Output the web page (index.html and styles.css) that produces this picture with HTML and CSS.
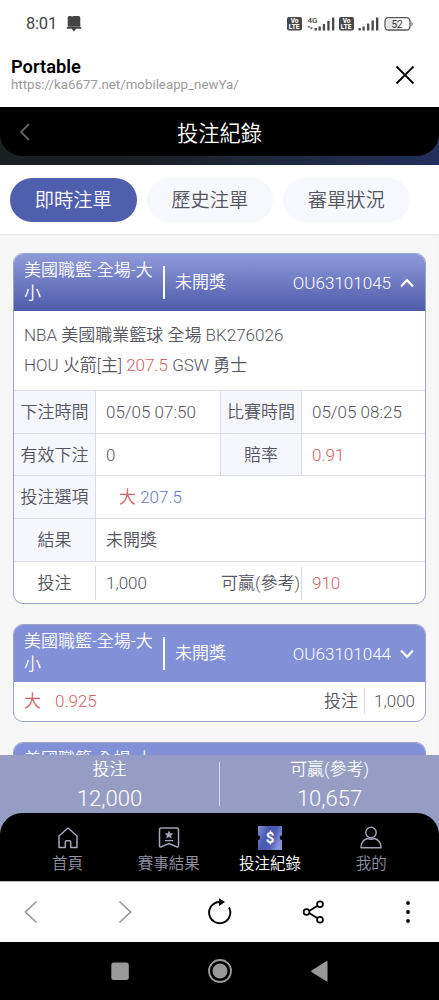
FILE: index.html
```
<!DOCTYPE html>
<html lang="zh-Hant">
<head>
    <meta charset="UTF-8">
    <meta name="viewport" content="width=device-width, initial-scale=1.0">
    <title>投注紀錄</title>
    <link rel="stylesheet" href="styles.css">
</head>
<body>

<!-- Status bar -->
<div class="status-bar">
    <span class="clock">8:01</span>
    <svg class="bell" width="16" height="16" viewBox="0 0 16 16"><path d="M3.500 0h1.800l.7 1 .8-1h5.700Q14.300 0 14.300 1.500v9.200H1.700V1.500Q1.700 0 3.500 0zM.8 11h14.400v1.800H.8zM5.800 12.800h4.400L8 15.500z" fill="#444"/></svg>
    <svg class="signals" width="130" height="18" viewBox="0 0 130 18">
        <g fill="#484848">
            <rect x="0" y="2" width="15" height="13.500" rx="2"/>
            <rect x="52" y="2" width="15" height="13.500" rx="2"/>
            <path d="M27.500 13h2.300v2.500h-2.300zM31.500 11.500h2.300v4h-2.300zM35.800 9h2.300v6.500h-2.300zM40.300 6h2.300v9.500h-2.300zM45 2.500h2.300v13H45zM71.500 13h2.300v2.500h-2.300zM75.500 11.500h2.300v4h-2.300zM80 8.500h2.300v7H80zM84.500 5.500h2.300v10h-2.300zM89 2.500h2.300v13H89z"/>
            <path d="M22 10.500l1.500 2h-3zM24.500 14.500l1.500-2h-3z"/>
            <path d="M124.500 6.500q2.200 2.200 0 5z"/>
        </g>
        <rect x="98" y="2.700" width="25" height="12.300" rx="3.500" fill="#fff" stroke="#555" stroke-width="1.300"/>
        <path d="M101 4.500h10v8.700h-10q-1.500 0-1.500-1.500V6q0-1.500 1.500-1.500z" fill="#e2e2e2"/>
        <g class="status-text">
            <text x="3.700" y="8.300" fill="#fff">Vo</text>
            <text x="1.800" y="14.300" fill="#fff">LTE</text>
            <text x="55.700" y="8.300" fill="#fff">Vo</text>
            <text x="53.800" y="14.300" fill="#fff">LTE</text>
            <text x="20.500" y="8" class="net">4G</text>
            <text x="104.500" y="12.700" class="level">52</text>
        </g>
    </svg>
</div>

<!-- Browser header -->
<div class="browser-head">
    <div>
        <div class="site-name">Portable</div>
        <div class="site-url">https://ka6677.net/mobileapp_newYa/</div>
    </div>
    <svg width="20" height="20" viewBox="0 0 20 20"><path d="M1.500 1.500l17 17M18.500 1.500l-17 17" stroke="#000" stroke-width="1.800"/></svg>
</div>

<!-- App header -->
<div class="app-top">
    <header class="app-header">
        <svg width="12" height="18" viewBox="0 0 12 18"><path d="M10 1L2 9l8 8" fill="none" stroke="#61636b" stroke-width="1.800"/></svg>
        <h1>投注紀錄</h1>
    </header>
</div>

<div class="tabs">
    <button class="tab active">即時注單</button>
    <button class="tab">歷史注單</button>
    <button class="tab">審單狀況</button>
</div>

<main class="bet-list">
    <section class="bet open">
        <div class="bet-head">
            <span class="game">美國職籃-全場-大小</span>
            <span class="state">未開獎</span>
            <span class="order">OU63101045</span>
            <svg width="14" height="10" viewBox="0 0 14 10"><path d="M1 8.500l6-6.300 6 6.300" fill="none" stroke="#fff" stroke-width="2.200"/></svg>
        </div>
        <div class="match">
            <p>NBA <span class="zh">美國職業籃球 全場</span> BK276026</p>
            <p>HOU <span class="zh">火箭[主]</span> <span class="red">207.5</span> GSW <span class="zh">勇士</span></p>
        </div>
        <div class="row">
            <span class="label">下注時間</span><span class="value">05/05 07:50</span>
            <span class="label second">比賽時間</span><span class="value">05/05 08:25</span>
        </div>
        <div class="row">
            <span class="label">有效下注</span><span class="value">0</span>
            <span class="label second">賠率</span><span class="value red">0.91</span>
        </div>
        <div class="row">
            <span class="label">投注選項</span><span class="value wide pick"><span class="red zh">大</span> <span class="blue">207.5</span></span>
        </div>
        <div class="row">
            <span class="label">結果</span><span class="value wide zh">未開獎</span>
        </div>
        <div class="row amount">
            <span class="label">投注</span><span class="value">1,000</span>
            <span class="label second">可贏(參考)</span><span class="value red">910</span>
        </div>
    </section>

    <section class="bet">
        <div class="bet-head">
            <span class="game">美國職籃-全場-大小</span>
            <span class="state">未開獎</span>
            <span class="order">OU63101044</span>
            <svg width="14" height="10" viewBox="0 0 14 10"><path d="M1 1.500l6 6.300 6-6.300" fill="none" stroke="#fff" stroke-width="2.200"/></svg>
        </div>
        <div class="summary">
            <span class="red zh">大</span>
            <span class="red odds">0.925</span>
            <span class="stake-label zh">投注</span>
            <span class="stake">1,000</span>
        </div>
    </section>

    <section class="bet">
        <div class="bet-head">
            <span class="game">美國職籃-全場-大小</span>
        </div>
    </section>
</main>

<!-- Totals and tab bar -->
<div class="bottom">
    <div class="totals">
        <div class="total"><span>投注</span><b>12,000</b></div>
        <div class="total"><span>可贏(參考)</span><b>10,657</b></div>
    </div>
    <nav class="app-nav">
        <a class="nav-item">
            <svg width="26" height="26" viewBox="0 0 26 26"><path d="M4 11l9-8 9 8v11.500h-6.300V17q0-1.200-1.200-1.200h-3q-1.200 0-1.200 1.200v5.500H4z" fill="none" stroke="#a2a4b7" stroke-width="1.500" stroke-linejoin="round"/></svg>
            <span>首頁</span>
        </a>
        <a class="nav-item">
            <svg width="26" height="26" viewBox="0 0 26 26"><path d="M3.500 4.500q0-1.500 1.500-1.500h16q1.500 0 1.500 1.500v16q0 2-2 1.300L13 18.500l-7.500 3.300q-2 .7-2-1.300z" fill="none" stroke="#a2a4b7" stroke-width="1.500"/><path d="M13 5.500l1.300 2.700 3 .4-2.200 2 .6 3-2.700-1.500-2.700 1.500.6-3-2.200-2 3-.4zM9 15h8v1.200H9z" fill="#a2a4b7"/></svg>
            <span>賽事結果</span>
        </a>
        <a class="nav-item current">
            <svg width="26" height="26" viewBox="0 0 26 26">
                <defs><linearGradient id="ticket" x1="0" y1="0" x2="1" y2=".4"><stop offset="0" stop-color="#8791da"/><stop offset=".4" stop-color="#4b59b3"/><stop offset=".7" stop-color="#4b59b3"/><stop offset="1" stop-color="#8490d8"/></linearGradient></defs>
                <path d="M1 1h24v9.500a2.300 2.300 0 0 0 0 4.600V25H1v-9.900a2.300 2.300 0 0 0 0-4.600z" fill="url(#ticket)"/>
                <text x="13" y="18.300" text-anchor="middle" class="dollar">$</text>
            </svg>
            <span>投注紀錄</span>
        </a>
        <a class="nav-item">
            <svg width="26" height="26" viewBox="0 0 26 26"><circle cx="13" cy="7.500" r="5.200" fill="none" stroke="#a2a4b7" stroke-width="1.400"/><path d="M3 22.800q0-7.500 6.500-9.300 3.500 1.500 7 0 6.500 1.800 6.500 9.300z" fill="none" stroke="#a2a4b7" stroke-width="1.400" stroke-linejoin="round"/></svg>
            <span>我的</span>
        </a>
    </nav>
</div>

<!-- Browser toolbar -->
<div class="toolbar">
    <svg width="28" height="28" viewBox="0 0 28 28"><path d="M19.500 3.500L8.500 14l11 10.500" fill="none" stroke="#999" stroke-width="1.700"/></svg>
    <svg width="28" height="28" viewBox="0 0 28 28"><path d="M8.500 3.500l11 10.500-11 10.500" fill="none" stroke="#999" stroke-width="1.700"/></svg>
    <svg width="28" height="28" viewBox="0 0 28 28"><path d="M13.500 4A10.600 10.600 0 1 0 23 9.500" fill="none" stroke="#000" stroke-width="1.900"/><path d="M13 .3L19 4l-6 4z"/></svg>
    <svg width="28" height="28" viewBox="0 0 28 28"><path d="M7.500 14L19.700 6.500M7.500 14l12.200 7.500" stroke="#000" stroke-width="1.700"/><g fill="#fff" stroke="#000" stroke-width="1.700"><circle cx="6.500" cy="14" r="2.900"/><circle cx="20" cy="6.200" r="2.900"/><circle cx="20" cy="21.800" r="2.900"/></g></svg>
    <svg width="28" height="28" viewBox="0 0 28 28"><circle cx="14" cy="5" r="1.900"/><circle cx="14" cy="14" r="1.900"/><circle cx="14" cy="23" r="1.900"/></svg>
</div>

<!-- System keys -->
<div class="system-keys">
    <svg width="26" height="26" viewBox="0 0 26 26"><rect x="4.300" y="4.500" width="17.500" height="17.500" rx="2.500" fill="#999"/></svg>
    <svg width="26" height="26" viewBox="0 0 26 26"><circle cx="13" cy="13" r="11" fill="none" stroke="#999" stroke-width="1.800"/><circle cx="13" cy="13" r="7.500" fill="#999"/></svg>
    <svg width="26" height="26" viewBox="0 0 26 26"><path d="M20.500 3.500v19.500q0 .8-.8.400L4.500 14q-.8-.7 0-1.400L19.700 3q.8-.4.800.5z" fill="#999"/></svg>
</div>

</body>
</html>
```
FILE: styles.css
```
* {
    margin: 0;
    padding: 0;
    box-sizing: border-box;
}

:root {
    --color-primary: #505eae;
    --color-head: #8290d8;
    --color-text: #55555f;
    --color-red: #d26069;
    --color-blue: #6479c5;
    --color-line: #dcdde6;
    --color-label-bg: #f5f7fd;
}

body {
    width: 439px;
    height: 1000px;
    display: flex;
    flex-direction: column;
    overflow: hidden;
    background-color: #fff;
    color: var(--color-text);
    font-family: Roboto, "Noto Sans CJK TC", sans-serif;
    font-size: 17px;
    font-weight: 300;
}

svg {
    display: block;
    flex: none;
}

.zh {
    font-weight: 350;
}

.red {
    color: var(--color-red);
}

.blue {
    color: var(--color-blue);
}

/* Status bar */
.status-bar {
    flex: none;
    height: 47px;
    display: flex;
    align-items: center;
    padding: 0 26px;
}

.clock {
    color: #444;
    font-size: 16.500px;
    font-weight: 400;
    letter-spacing: -0.2px;
}

.bell {
    margin-left: 9px;
}

.signals {
    margin: 0 -4px 0 auto;
}

.status-text {
    font-size: 6.500px;
    font-weight: 800;
}

.status-text .net {
    font-size: 8px;
    font-weight: 500;
    fill: #444;
}

.status-text .level {
    font-size: 10px;
    font-weight: 400;
    fill: #333;
}

/* Browser header */
.browser-head {
    flex: none;
    height: 60px;
    display: flex;
    justify-content: space-between;
    align-items: center;
    padding: 0 24px 5px 11px;
}

.site-name {
    color: #000;
    font-size: 18.300px;
    font-weight: 600;
    line-height: 21px;
}

.site-url {
    color: #999;
    font-size: 13.300px;
    font-weight: 400;
    line-height: 16px;
}

/* App header */
.app-top {
    flex: none;
    height: 58px;
    background: linear-gradient(90deg, #1b2023 30%, #232f5d);
}

.app-header {
    height: 49px;
    display: flex;
    align-items: center;
    padding: 0 19px;
    background-color: #000;
    border-radius: 0 0 22px 22px;
}

.app-header h1 {
    flex: 1;
    padding: 0 12px 1px 0;
    color: #fff;
    font-size: 21.300px;
    font-weight: 350;
    text-align: center;
}

/* Tabs */
.tabs {
    flex: none;
    height: 69px;
    display: flex;
    gap: 10px;
    padding: 13px 10px 12px;
    background-color: #fff;
}

.tab {
    width: 126.500px;
    height: 44px;
    padding-bottom: 2px;
    border: none;
    border-radius: 22px;
    background-color: #f7f8fd;
    color: #55555f;
    font: inherit;
    font-size: 19.300px;
    font-weight: 350;
    cursor: pointer;
}

.tab.active {
    background-color: var(--color-primary);
    color: #fff;
}

/* Bet list */
.bet-list {
    flex: 1;
    min-height: 0;
    display: flex;
    flex-direction: column;
    gap: 20px;
    padding: 19px 13px 0;
    overflow: hidden;
    background-color: #f6f6f6;
    box-shadow: inset 0 3px 3px -2px #e4e4e4;
}

.bet {
    flex: none;
    border: 1px solid #9ea3ca;
    border-radius: 10px;
    background-color: #fff;
    overflow: hidden;
}

.bet-head {
    height: 57px;
    display: flex;
    align-items: center;
    padding: 0 11px 0 10px;
    background-color: var(--color-head);
    color: #fff;
}

.bet.open .bet-head {
    background: linear-gradient(#8e9ad9, #4e5baa);
}

.game {
    width: 131px;
    padding-bottom: 2px;
    font-weight: 350;
    line-height: 23px;
}

.state {
    margin-left: 8px;
    padding-left: 10px;
    border-left: 2px solid #fff;
    font-weight: 350;
    line-height: 33px;
}

.order {
    margin: 0 9px 0 auto;
}

.match {
    height: 79px;
    padding: 10px;
    line-height: 29.500px;
}

/* Detail rows */
.row {
    height: 43px;
    display: grid;
    grid-template: 100% / 82px 124px 82px 1fr;
    border-top: 1px solid var(--color-line);
    line-height: 43px;
}

.row:nth-child(4),
.row:last-child {
    height: 42px;
}

.label {
    border-right: 1px solid var(--color-line);
    background-color: var(--color-label-bg);
    font-weight: 350;
    text-align: center;
    white-space: nowrap;
}

.label.second {
    border-left: 1px solid var(--color-line);
}

.value {
    padding-left: 10px;
}

.value.wide {
    grid-column: span 3;
}

.pick {
    padding-left: 23px;
}

.amount .label {
    height: 34px;
    margin-top: 4px;
    border-left: none;
    background: none;
    line-height: 35px;
}

/* Collapsed bet */
.summary {
    height: 39px;
    display: flex;
    align-items: baseline;
    padding: 6px 10px 0;
    line-height: 26px;
}

.odds {
    margin-left: 14px;
}

.stake-label {
    margin-left: auto;
    padding-right: 6px;
    border-right: 1px solid var(--color-line);
}

.stake {
    margin-left: 9px;
}

/* Totals and tab bar */
.bottom {
    flex: none;
    background-color: #969dc5;
    color: #fff;
}

.totals {
    height: 58px;
    display: flex;
    align-items: center;
}

.total {
    flex: 1;
    height: 44px;
    display: flex;
    flex-direction: column;
    align-items: center;
    justify-content: center;
}

.total + .total {
    border-left: 1px solid #d5d8ec;
}

.total span {
    font-weight: 350;
    line-height: 28px;
}

.total b {
    font-size: 22px;
    font-weight: 300;
    line-height: 31px;
}

.app-nav {
    height: 68px;
    display: flex;
    padding: 12px 17px 0;
    border-radius: 22px 22px 0 0;
    background-color: #000;
}

.nav-item {
    flex: 1;
    display: flex;
    flex-direction: column;
    align-items: center;
    color: #9193a5;
    font-size: 15.500px;
    font-weight: 350;
    line-height: 26px;
}

.nav-item.current {
    color: #fff;
}

.dollar {
    fill: #fff;
    font-size: 15px;
    font-weight: 700;
}

/* Browser toolbar */
.toolbar {
    flex: none;
    height: 61px;
    display: flex;
    justify-content: space-between;
    align-items: center;
    padding: 0 17px;
    border-top: 1px solid #bbb;
}

/* System keys */
.system-keys {
    flex: none;
    height: 58px;
    display: flex;
    justify-content: center;
    align-items: center;
    gap: 74px;
    background-color: #000;
}
```
